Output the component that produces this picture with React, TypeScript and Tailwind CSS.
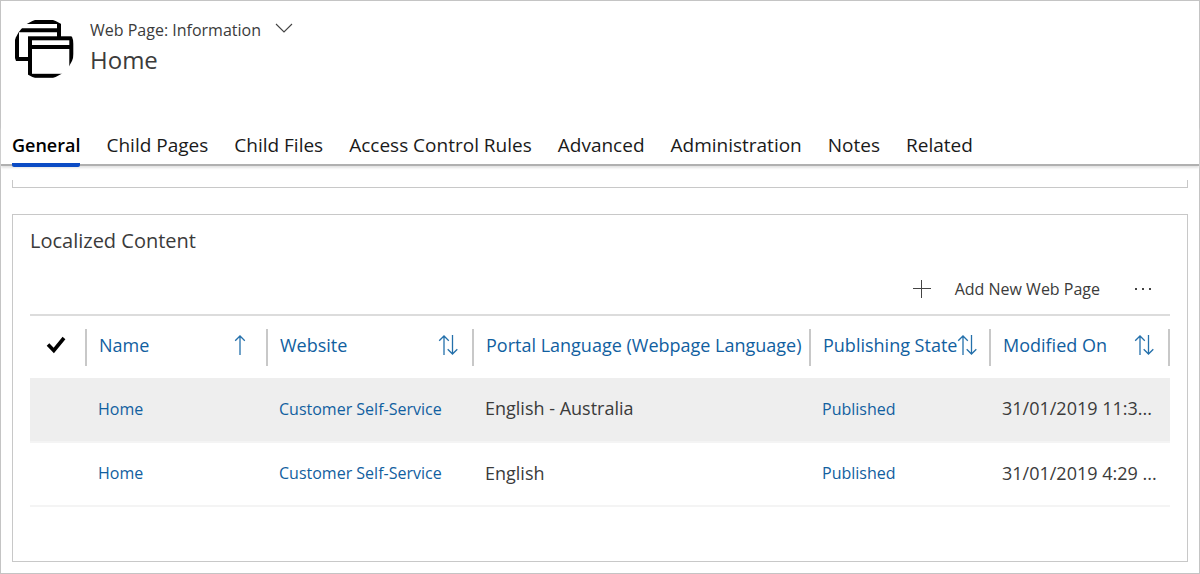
import React from "react";

const tabs = [
  "General",
  "Child Pages",
  "Child Files",
  "Access Control Rules",
  "Advanced",
  "Administration",
  "Notes",
  "Related",
];

type SortState = "asc" | "both" | "none";

const columns: { label: string; sort: SortState }[] = [
  { label: "Name", sort: "asc" },
  { label: "Website", sort: "both" },
  { label: "Portal Language (Webpage Language)", sort: "none" },
  { label: "Publishing State", sort: "both" },
  { label: "Modified On", sort: "both" },
];

const rows = [
  { language: "English - Australia", modified: "31/01/2019 11:3..." },
  { language: "English", modified: "31/01/2019 4:29 ..." },
];

function PagesIcon() {
  return (
    <svg width="60" height="60" viewBox="-1 -1 60 60" className="shrink-0" aria-hidden="true">
      <defs>
        <clipPath id="pages-clip">
          <circle cx="29" cy="29" r="30.4" />
        </clipPath>
      </defs>
      <g clipPath="url(#pages-clip)" fill="none" stroke="#000" strokeWidth="4">
        <path d="M0 2H44V18M0 10.3H44M2 8V39H15" />
        <rect x="15" y="18.3" width="41.3" height="37.5" fill="#fff" />
        <path d="M15 27H56" />
      </g>
    </svg>
  );
}

function SortIcon({ sort }: { sort: SortState }) {
  if (sort === "none") return null;
  if (sort === "asc")
    return (
      <svg width="12" height="20" viewBox="0 0 12 20" className="mr-5 shrink-0" fill="none" stroke="#2470ab" strokeWidth="1.3" aria-hidden="true">
        <path d="M6 20V1M1.2 5.8L6 1L10.8 5.8" />
      </svg>
    );
  return (
    <svg width="20" height="20" viewBox="0 0 20 20" className="mr-[14px] shrink-0" fill="none" stroke="#2470ab" strokeWidth="1.3" aria-hidden="true">
      <path d="M6 20V1M1.2 5.8L6 1L10.8 5.8M14.5 0V19M9.7 14.2L14.5 19L19.3 14.2" />
    </svg>
  );
}

export default function App() {
  return (
    <div className="flex min-h-screen flex-col border border-[#c4c4c4] bg-white font-['Open_Sans','Noto_Sans',sans-serif] text-[#3b3b3b]">
      <header className="flex gap-4 pt-[18px] pl-[13px]">
        <PagesIcon />
        <div>
          <button type="button" className="flex items-center gap-[14px] text-[16px] leading-[22px]">
            Web Page: Information
            <svg width="18" height="10" viewBox="0 0 18 10" className="-mt-1" fill="none" stroke="#444" strokeWidth="1.1" aria-hidden="true">
              <path d="M1 1L9 9L17 1" />
            </svg>
          </button>
          <h1 className="text-[24px] leading-[38px]">Home</h1>
        </div>
      </header>

      <nav className="mt-12 border-b-2 border-[#b0b0b0] pl-[11px] shadow-[0_2px_2px_#e4e4e4]">
        <div role="tablist" className="flex gap-[26px] text-[19px] leading-[36px] text-[#1a1a1a]">
          {tabs.map((tab, i) => (
            <button
              key={tab}
              type="button"
              role="tab"
              aria-selected={i === 0}
              className={
                i === 0
                  ? "-mb-[3px] rounded-b-xs border-b-4 border-[#0b4bc4] text-[18px] font-semibold text-black"
                  : "-mb-[3px] border-b-4 border-transparent"
              }
            >
              {tab}
            </button>
          ))}
        </div>
      </nav>

      <main className="flex grow flex-col px-[11px] pt-[14px] pb-[11px]">
        <div className="h-2 border-x border-b border-[#c8c8c8]" />
        <section className="mt-[26px] grow border border-[#c8c8c8] px-[17px] pt-3">
          <h2 className="text-[20px] leading-[28px]">Localized Content</h2>
          <div className="flex h-[59px] items-center justify-end gap-[34px] pt-2 pr-[18px]">
            <button type="button" className="flex items-center gap-6 text-[16px]">
              <svg width="18" height="18" viewBox="0 0 18 18" fill="none" stroke="#444" aria-hidden="true">
                <path d="M0 8.5H18M8.5 0V18" />
              </svg>
              Add New Web Page
            </button>
            <button type="button" aria-label="More commands">
              <svg width="18" height="4" viewBox="0 0 18 4" fill="#444" aria-hidden="true">
                <path d="M1 1h2v2H1zM8 1h2v2H8zM15 1h2v2h-2z" />
              </svg>
            </button>
          </div>

          <table className="w-full table-fixed border-t-2 border-[#dcdcdc]">
            <colgroup>
              <col className="w-[57px]" />
              <col className="w-[181px]" />
              <col className="w-[206px]" />
              <col />
              <col className="w-[180px]" />
              <col className="w-[179px]" />
            </colgroup>
            <thead>
              <tr className="h-[63px] text-[18px] text-[#1160a0]">
                <th className="p-0 font-normal" aria-label="Selected">
                  <div className="flex h-[37px] items-center border-r-2 border-[#c8c8c8] pb-1 pl-4">
                    <svg width="20" height="18" viewBox="0 0 20 18" fill="none" stroke="#000" strokeWidth="3.6" aria-hidden="true">
                      <path d="M2 8.5L7.8 14.5L18 2" />
                    </svg>
                  </div>
                </th>
                {columns.map((column) => (
                  <th key={column.label} className="p-0 text-left font-normal">
                    <div className="flex h-[37px] items-center border-r-2 border-[#c8c8c8] pb-1">
                      <button type="button" className="flex w-full items-center justify-between pl-3 whitespace-nowrap">
                        {column.label}
                        <SortIcon sort={column.sort} />
                      </button>
                    </div>
                  </th>
                ))}
              </tr>
            </thead>
            <tbody className="text-[18px]">
              {rows.map((row, i) => (
                <tr key={row.language} className={i === 0 ? "h-16 border-b-2 border-[#f4f4f4] bg-[#eeeeee]" : "h-16 border-b-2 border-[#f4f4f4]"}>
                  <td />
                  <td className="p-0 pb-0.5 pl-[11px] text-[16px] text-[#1160a0]"><a href="#home">Home</a></td>
                  <td className="p-0 pb-0.5 pl-[11px] text-[16px] text-[#1160a0]"><a href="#website">Customer Self-Service</a></td>
                  <td className="p-0 pb-0.5 pl-[11px]">{row.language}</td>
                  <td className="p-0 pb-0.5 pl-[11px] text-[16px] text-[#1160a0]"><a href="#state">Published</a></td>
                  <td className="p-0 pb-0.5 pl-[11px] whitespace-nowrap">{row.modified}</td>
                </tr>
              ))}
            </tbody>
          </table>
        </section>
      </main>
    </div>
  );
}
